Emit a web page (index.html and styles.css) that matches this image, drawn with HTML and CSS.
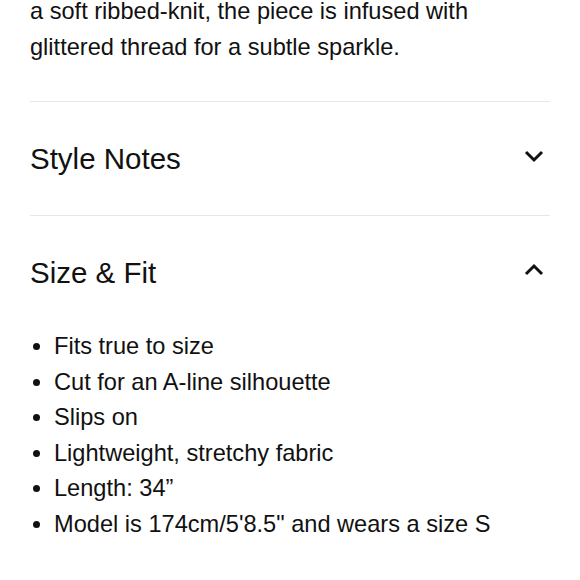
FILE: index.html
```html
<!DOCTYPE html>
<html lang="en">
<head>
<meta charset="utf-8">
<link rel="stylesheet" href="styles.css">
</head>
<body>
<div class="page">
  <p class="desc">a soft ribbed-knit, the piece is infused with glittered thread for a subtle sparkle.</p>
  <section class="acc">
    <div class="acc-head">
      <h2 class="acc-title">Style Notes</h2>
      <svg class="chev" width="22" height="14" viewBox="0 0 22 14"><polyline points="3,3 11,11 19,3" fill="none" stroke="#111" stroke-width="3"/></svg>
    </div>
  </section>
  <section class="acc">
    <div class="acc-head">
      <h2 class="acc-title">Size &amp; Fit</h2>
      <svg class="chev" width="22" height="14" viewBox="0 0 22 14"><polyline points="3,11 11,3 19,11" fill="none" stroke="#111" stroke-width="3"/></svg>
    </div>
    <ul class="fit-list">
      <li>Fits true to size</li>
      <li>Cut for an A-line silhouette</li>
      <li>Slips on</li>
      <li>Lightweight, stretchy fabric</li>
      <li>Length: 34”</li>
      <li>Model is 174cm/5'8.5" and wears a size S</li>
    </ul>
  </section>
</div>
</body>
</html>
```

FILE: styles.css
```css
html, body {
  margin: 0;
  padding: 0;
  background: #fff;
}
body {
  font-family: "Liberation Sans", Arial, sans-serif;
  color: #111;
}
.page {
  width: 520px;
  padding: 0 30px;
}
.desc {
  font-size: 23.6px;
  line-height: 35.5px;
  margin: -6px 0 0;
  padding-bottom: 36px;
  border-bottom: 1px solid #e6e6e6;
}
.acc {
  border-bottom: 1px solid #e6e6e6;
}
.acc-head {
  display: flex;
  align-items: center;
  justify-content: space-between;
  height: 113px;
}
.acc-title {
  margin: 0;
  font-weight: normal;
  font-size: 29.5px;
}
.chev {
  margin-right: 5px;
  margin-top: -5px;
}
.fit-list {
  margin: 0;
  padding: 0 0 40px 24px;
  font-size: 23.6px;
  line-height: 35.5px;
}
.fit-list li {
  padding-left: 0;
}
```
